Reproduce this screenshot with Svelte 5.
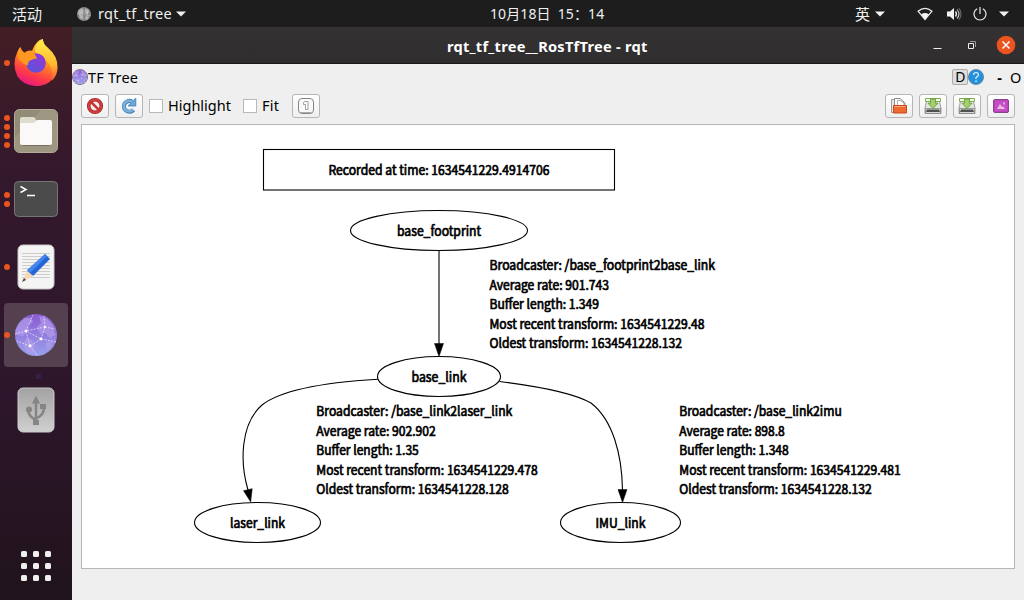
<script>
  const nodes = [
    { name: 'base_footprint', x: 439, y: 230.5, rx: 88.5, ry: 20, w: 84 },
    { name: 'base_link', x: 439, y: 376.5, rx: 61.5, ry: 20, w: 55 },
    { name: 'laser_link', x: 257.5, y: 522.5, rx: 63, ry: 20, w: 55 },
    { name: 'IMU_link', x: 620.5, y: 522.5, rx: 60, ry: 20, w: 50 },
  ];
  const labels = [
    { x: 489.5, y: 270, rows: [['Broadcaster: /base_footprint2base_link', 225.5], ['Average rate: 901.743', 119.5], ['Buffer length: 1.349', 109.5], ['Most recent transform: 1634541229.48', 215], ['Oldest transform: 1634541228.132', 192.5]] },
    { x: 316.3, y: 416, rows: [['Broadcaster: /base_link2laser_link', 196], ['Average rate: 902.902', 119.5], ['Buffer length: 1.35', 102.5], ['Most recent transform: 1634541229.478', 221.5], ['Oldest transform: 1634541228.128', 192.5]] },
    { x: 679.3, y: 416, rows: [['Broadcaster: /base_link2imu', 162.5], ['Average rate: 898.8', 105.5], ['Buffer length: 1.348', 109.5], ['Most recent transform: 1634541229.481', 221.5], ['Oldest transform: 1634541228.132', 192.5]] },
  ];
  const apps = [
    { id: 'firefox', dots: 1 },
    { id: 'files', dots: 4 },
    { id: 'terminal', dots: 2 },
    { id: 'editor', dots: 1 },
    { id: 'rqt', dots: 1, active: true },
  ];
  const nine = [0, 1, 2, 3, 4, 5, 6, 7, 8];
</script>

{#snippet globe(size)}
  <svg width={size} height={size} viewBox="0 0 42 42">
    <circle cx="21" cy="21" r="21" fill="url(#globeFill)" />
    <path d="M4 9 10 4l6 0 2 4-5 3 1 5-6 6-6-1-2-4zM24 2l8 2 6 8 2 9-5 3-5-5-5 1-3-7 4-4zM11 24l6 2 3 6-2 8-6-2-4-7zM30 29l6-2 1 5-5 4z" fill="#b49bea" opacity=".7" />
    <g fill="none" stroke="#e9e0ff" stroke-width=".9" stroke-dasharray="2 1.2" opacity=".85">
      <path d="M0 20 11 17 30 13 26 25 11 17 15 32 26 25 41 28M15 32 2 27M30 13 40 15M11 17 18 1M15 32 22 41M30 13 29 2" />
    </g>
    <g fill="#fff"><circle cx="11" cy="17" r="1.3" /><circle cx="30" cy="13" r="1.1" /><circle cx="26" cy="25" r="1.4" /><circle cx="15" cy="32" r="1.4" /></g>
  </svg>
{/snippet}

{#snippet caret()}
  <svg width="10" height="6" viewBox="0 0 10 6"><path d="M0 .5h10L5 5.5z" fill="#f2f2f2" /></svg>
{/snippet}

{#snippet save()}
  <svg width="18" height="18" viewBox="0 0 18 18">
    <path d="M3 2h12l2 9v5.500H1V11z" fill="#e2e4e0" stroke="#8a8e88" stroke-width=".8" />
    <path d="M1.500 11.500h15v5h-15z" fill="#d5d8d3" stroke="#6a6e68" stroke-width=".6" /><path d="M3 12.500h12l1 2.500H2z" fill="#4f534e" />
    <path d="M1.500 1.500h15v3h-15z" fill="#f3f8ee" stroke="#73a644" stroke-width=".9" />
    <path d="M6.500 2v4.200H4L9 11.500l5-5.300h-2.500V2z" fill="#a3d068" stroke="#609b31" stroke-width=".8" />
  </svg>
{/snippet}

<div class="desktop">
  <header class="panel">
    <span class="activities">活动</span>
    <div class="appmenu">
      <svg width="14" height="14" viewBox="0 0 14 14"><circle cx="7" cy="7" r="7" fill="#858585" /><path d="M1 4l4-3 2 3-2 3 1 4-3 1M8 1l4 3-1 4-3-2zM9 9l3 1-2 3-2-1z" fill="#b4b4b4" /><path d="M0 7l5-2 5 4 4-1M5 5l1 8M10 9l1-7" stroke="#ddd" stroke-width=".4" fill="none" /></svg>
      <span class="appname">rqt_tf_tree</span>
      {@render caret()}
    </div>
    <span class="clock">10月18日&ensp;15：14</span>
    <div class="status">
      <span class="lang">英</span>
      {@render caret()}
      <svg class="wifi" width="16" height="14" viewBox="0 0 16 14"><path d="M1 4.200Q8-1.600 15 4.200L8 12.500z" fill="none" stroke="#eee" stroke-width="1.200" /><path d="M4.200 7.200Q8 5 11.800 7.200L8 12.500z" fill="#f4f4f4" /></svg>
      <svg class="sound" width="16" height="14" viewBox="0 0 16 14"><path d="M1 4.500h3l4-3.500v12l-4-3.500H1z" fill="#f2f2f2" /><path d="M9.500 4.500q2 2.500 0 5" stroke="#eee" stroke-width="1.300" fill="none" /><path d="M11 2.500q4 4.500 0 9" stroke="#ccc" stroke-width="1.100" fill="none" /><path d="M13 1.200q4 5.800 0 11.600" stroke="#777" fill="none" /></svg>
      <svg class="power" width="14" height="14" viewBox="0 0 14 14"><path d="M4.200 1.700a6 6 0 1 0 5.600 0M7 0v7" stroke="#e8e8e8" stroke-width="1.200" fill="none" /></svg>
      {@render caret()}
    </div>
  </header>

  <div class="workspace">
    <nav class="dock">
      {#each apps as app}
        <div class="app" class:active={app.active}>
          <div class="dots">{#each Array(app.dots) as _}<i></i>{/each}</div>
          {#if app.id === 'firefox'}
            <svg class="fox" width="46" height="47" viewBox="0 0 46 48">
              <path d="M7 8q1 4 4 6 4-3 8-2Q23 1 30 0q0 5 5 9l5 7q6 10 3 19-4 11-16 13Q11 49 4 38-2 26 4 13z" fill="url(#fox)" />
              <path d="M30 0q0 5 5 9 10 8 10 20 0 8-6 14 3-13-5-20-10-4-12-11 0-8 8-12z" fill="url(#flame)" />
              <circle cx="23" cy="24.500" r="10" fill="url(#violet)" />
              <path d="M6 9q2 4 6 6 4-3 9-1l3 6q-3 0-7 2-3 2-2 5-6-1-10-7-2-5 1-11z" fill="#ff9820" />
            </svg>
          {:else if app.id === 'files'}
            <svg width="44" height="44" viewBox="0 0 44 44"><rect x=".5" y=".5" width="43" height="43" rx="5" fill="#928b76" stroke="#b1ac9a" /><path d="M1 28 27 1h12q4 0 4 4v34q0 4-4 4H5q-4 0-4-4z" fill="#9d9681" /><path d="M6 16V10q0-2 2-2h11q2 0 2.500 2l1 2H36v8H6z" fill="#dedbcf" /><path d="M6 14h14l3-3h13q2 0 2 2v21q0 2-2 2H8q-2 0-2-2z" fill="#faf9f7" /><path d="M8 36.500h28" stroke="#777160" /></svg>
          {:else if app.id === 'terminal'}
            <svg width="44" height="36" viewBox="0 0 44 36"><rect x=".5" y=".5" width="43" height="35" rx="4" fill="#4b4b4b" stroke="#757575" /><path d="M6.500 5.500 12 8.500 6.500 11.500M13 14.500h8" stroke="#fff" stroke-width="1.500" fill="none" /></svg>
          {:else if app.id === 'editor'}
            <svg width="38" height="46" viewBox="0 0 38 46"><rect x="1" y="1" width="36" height="44" rx="5" fill="#f4f4f4" stroke="#c7c7c7" /><path d="M5 9.500h28M5 12.500h28M5 15.500h28M5 18.500h28M5 21.500h28M5 24.500h28M5 27.500h28M5 30.500h28M5 33.500h28" stroke="#ccc" /><path d="m28 10 5 5-17 17-6-5z" fill="#2466d8" /><path d="m28 10 2 2-17 17-3-3z" fill="#4486ed" /><path d="M10 27 5.500 37.500 16 32z" fill="#f8d7b5" /><path d="m7 34-2 4 4-2z" fill="#444" /></svg>
          {:else}
            {@render globe(42)}
          {/if}
        </div>
      {/each}
      <i class="mark"></i>
      <div class="app usb">
        <svg width="38" height="46" viewBox="0 0 38 46"><rect x="1" y="1" width="36" height="44" rx="5" fill="url(#usbFill)" stroke="#c9c9c9" /><path d="M19 35V14M19 33q-7-3-8-10M19 31q8-2 8-11" fill="none" stroke="#858585" stroke-width="2.500" /><path d="m19 8.500 4 8h-8zM16 33h6v5h-6zM23 17h6v5h-6z" fill="#858585" /><circle cx="12" cy="22.500" r="3" fill="#858585" /></svg>
      </div>
      <div class="launcher">{#each nine as _}<i></i>{/each}</div>
    </nav>

    <main class="window">
      <div class="titlebar">
        <span class="title">rqt_tf_tree__RosTfTree - rqt</span>
        <div class="controls">
          <svg width="9" height="9" viewBox="0 0 9 9"><path d="M.5 7.500h8" stroke="#eee" /></svg>
          <svg width="9" height="9" viewBox="0 0 9 9"><path d="M1.500 2.500h5v5h-5z" stroke="#eee" fill="none" /><path d="M3 .5h5.500V6" stroke="#999" fill="none" /></svg>
          <svg width="20" height="20" viewBox="0 0 20 20"><circle cx="10" cy="10" r="9.300" fill="#e95420" /><path d="m6.500 6.500 7 7m0-7-7 7" stroke="#fff" stroke-width="1.500" /></svg>
        </div>
      </div>

      <div class="plughead">
        <div class="ball">{@render globe(14)}</div>
        <span class="plugname">TF Tree</span>
        <span class="dbtn">D</span>
        <svg width="16" height="16" viewBox="0 0 16 16"><circle cx="8" cy="8" r="7.600" fill="#2491dd" stroke="#63798b" stroke-width=".7" /><path d="M5.600 6q0-2.500 2.400-2.500T10.500 6Q10.500 7 8 8.500V10" stroke="#e4f3fe" stroke-width="1.200" fill="none" /><path d="M7.300 11.500h1.500V13H7.300z" fill="#e4f3fe" /></svg>
        <span class="dash">-</span>
        <span class="oh">O</span>
      </div>

      <div class="tools">
        <div class="btn"><svg width="18" height="18" viewBox="0 0 18 18"><circle cx="9" cy="9" r="6.300" fill="#f8eeee" stroke="#972527" stroke-width="3.600" /><circle cx="9" cy="9" r="6.300" fill="none" stroke="#d43c3e" stroke-width="2.200" /><path d="m4.700 4.700 8.600 8.600" stroke="#c93335" stroke-width="2.600" /></svg></div>
        <div class="btn"><svg width="18" height="18" viewBox="0 0 18 18"><path d="M13.500 12.800A5.400 5.400 0 1 1 12 4.600" fill="none" stroke="#427eb6" stroke-width="4.200" /><path d="M15.800 1v8H8z" fill="#6da5d6" stroke="#427eb6" stroke-width=".8" /><path d="M13 12.500A5.200 5.200 0 1 1 12 4.800" fill="none" stroke="#7bb0dd" stroke-width="2.800" /></svg></div>
        <i class="check"></i><span class="hl">Highlight</span>
        <i class="check"></i><span class="fit">Fit</span>
        <div class="btn"><svg width="18" height="18" viewBox="0 0 18 18"><rect x="1.500" y="1.500" width="15" height="15" rx="3.500" fill="#fafafa" stroke="#858585" /><path d="M3 15.500h12" stroke="#aaa" /><path d="M6.500 5.500 8 4.500h3v8H8.500V7.500h-2z" fill="#fff" stroke="#888" stroke-width=".8" /></svg></div>
        <div class="right">
          <div class="btn"><svg width="18" height="18" viewBox="0 0 18 18"><path d="M1.500 15.500V2.500H7l1.500 2H13l2 2v9z" fill="#e6e6e6" stroke="#9a9a9a" /><path d="M4.500 9V1.500H10L14 5v4z" fill="#fafafa" stroke="#8b8b8b" /><path d="M7.500 9V3.500h3L14 6v3" fill="#fff" stroke="#999" stroke-width=".8" /><path d="M3.500 8.500h13V16h-13z" fill="#ed6b32" stroke="#c8471b" /><path d="M4.500 9.500h11" stroke="#f8a375" /></svg></div>
          <div class="btn">{@render save()}</div>
          <div class="btn">{@render save()}</div>
          <div class="btn"><svg width="18" height="18" viewBox="0 0 18 18"><rect x="1.500" y="2.500" width="15" height="13" rx="1.500" fill="#bd42b9" stroke="#87448b" /><path d="M3 4h12v10H3z" fill="#c44fc5" /><path d="m5 12 3-5 2 3 1-1 2 3z" fill="#eab9e8" /><path d="M11 5.500h2v2h-2z" fill="#e6a7e4" /></svg></div>
        </div>
      </div>

      <div class="canvas">
        <svg width="932" height="444" viewBox="82 125 932 444">
          <g fill="none" stroke="#000" stroke-width="1.1">
            <rect x="263.500" y="149.500" width="351" height="40.500" />
            {#each nodes as n}<ellipse cx={n.x} cy={n.y} rx={n.rx} ry={n.ry} />{/each}
            <path d="M439 250.500V344" />
            <path d="M377.800 379.200C330 382 282 389 262 405C240 424 240 463 248 490" />
            <path d="M499.500 381.500C536 386 572 392 591 403C613 420 622 455 622.500 490" />
          </g>
          <path d="M434.500 343.500h9L439 356.500zM243.500 490.700l8.700-2L250.700 502zM618 489.500h9L622.500 502.500z" stroke="#000" stroke-width=".5" />
          <g class="gtext">
            <text x="328.500" y="175" textLength="221" lengthAdjust="spacingAndGlyphs">Recorded at time: 1634541229.4914706</text>
            {#each nodes as n}<text x={n.x - n.w / 2} y={n.y + 5} textLength={n.w} lengthAdjust="spacingAndGlyphs">{n.name}</text>{/each}
            {#each labels as l}
              {#each l.rows as [t, w], i}<text x={l.x} y={l.y + i * 19.5} textLength={w} lengthAdjust="spacingAndGlyphs">{t}</text>{/each}
            {/each}
          </g>
        </svg>
      </div>
    </main>
  </div>
</div>

<svg class="defs" width="0" height="0">
  <defs>
    <linearGradient id="globeFill" x1="0" y1="0" x2="0" y2="1"><stop offset="0" stop-color="#8a5bd0" /><stop offset="1" stop-color="#9aa1ee" /></linearGradient>
    <linearGradient id="fox" x1=".7" y1="0" x2=".3" y2="1"><stop offset="0" stop-color="#ffd02f" /><stop offset=".45" stop-color="#ff8a1f" /><stop offset=".75" stop-color="#ff3b47" /><stop offset="1" stop-color="#e4148a" /></linearGradient>
    <linearGradient id="flame" x1="0" y1="0" x2="0" y2="1"><stop offset="0" stop-color="#fff04e" /><stop offset=".6" stop-color="#ffb92e" /><stop offset="1" stop-color="#ff5038" /></linearGradient>
    <linearGradient id="violet" x1="1" y1="0" x2="0" y2="1"><stop offset="0" stop-color="#9a34d6" /><stop offset="1" stop-color="#5558d9" /></linearGradient>
    <linearGradient id="usbFill" x1="0" y1="0" x2="0" y2="1"><stop offset="0" stop-color="#a2a2a2" /><stop offset="1" stop-color="#d0d0d0" /></linearGradient>
  </defs>
</svg>

<style>
  :global(body) { overflow: hidden; }
  .desktop { width: 1024px; height: 600px; display: flex; flex-direction: column; background: #efefef; color: #000; font: 14.5px/20px "Noto Sans", "Noto Sans CJK SC", sans-serif; }
  svg { display: block; flex: none; }
  i { display: block; flex: none; }
  .defs { position: absolute; }
  span { white-space: pre; }
  .panel { height: 27px; flex: none; background: #1d1d1d; color: #f0f0f0; display: grid; grid-template-columns: 76px 1fr 120px 414px; align-items: center; font-size: 14px; }
  .activities { padding-left: 12px; font-size: 15px; }
  .appmenu { display: flex; align-items: center; gap: 7px; padding-left: 1px; }
  .appname { font-size: 14.5px; letter-spacing: 0.35px; margin-right: -3px; padding-bottom: 1px; }
  .clock { font-size: 14px; letter-spacing: 0.1px; }
  .status { display: flex; align-items: center; justify-content: flex-end; padding-right: 15px; }
  .lang { margin-right: 5px; font-size: 15px; }
  .wifi { margin-left: 32px; }
  .sound { margin-left: 13px; }
  .power { margin: 0 12px 0 11px; }
  .workspace { display: flex; flex: 1; min-height: 0; }
  .dock { width: 72px; flex: none; box-sizing: border-box; padding-top: 4px; display: flex; flex-direction: column; align-items: center; background: linear-gradient(#431e25, #34182c 25%, #2d162b 65%, #20131b); }
  .app { width: 64px; height: 64px; flex: none; margin-bottom: 4px; display: grid; grid-template-columns: 6px 1fr; border-radius: 4px; align-items: center; }
  .app svg { justify-self: center; margin-right: 6px; }
  .app .fox { margin-bottom: 2px; }
  .active { background: #55404f; }
  .dots { display: flex; flex-direction: column; gap: 3px; }
  .dots i { width: 6px; height: 6px; border-radius: 3px; background: #e95420; }
  .mark { width: 5px; height: 5px; margin: 3px 0 -1px 5px; background: #312146; }
  .usb { grid-template-columns: 1fr; }
  .usb svg { margin: 0; }
  .launcher { margin-top: auto; margin-bottom: 19px; display: grid; grid-template-columns: repeat(3, 6px); gap: 6px; }
  .launcher i { width: 6px; height: 6px; border-radius: 1.5px; background: #f0f0ee; }
  .window { flex: 1; display: flex; flex-direction: column; background: #efefef; }
  .titlebar { height: 37px; flex: none; box-sizing: border-box; background: linear-gradient(#353233, #302d2e); border-bottom: 1px solid #191919; color: #fff; display: grid; grid-template-columns: 375px 202px 1fr; align-items: center; }
  .title { grid-column: 2; font-weight: 700; font-size: 14.6px; letter-spacing: 0.26px; padding-top: 1px; }
  .controls { display: flex; justify-content: flex-end; align-items: center; gap: 25px; padding-right: 8px; }
  .controls svg:last-child { margin-left: -5px; }
  .plughead { height: 27px; flex: none; display: flex; align-items: center; padding-bottom: 1px; box-sizing: border-box; }
  .ball { border: 1px solid #766c86; border-radius: 50%; }
  .plugname { margin-right: auto; letter-spacing: 0.2px; }
  .dbtn { width: 14px; height: 14px; line-height: 14px; text-align: center; border: 1px solid #aaa; border-radius: 2px; background: #dedede; font-size: 14px; }
  .dash { margin-left: 13px; font-weight: 700; }
  .oh { margin-left: 8px; margin-right: 3px; width: 11px; }
  .tools { height: 29px; flex: none; display: flex; align-items: center; padding: 0 9px; }
  .btn { width: 28px; height: 24px; flex: none; box-sizing: border-box; border: 1px solid #b5b5b5; border-radius: 3px; background: linear-gradient(#fff, #efefef); display: grid; place-items: center; margin-right: 6px; }
  .check { width: 14px; height: 14px; box-sizing: border-box; border: 1px solid #b9b9b9; background: #fff; margin-right: 5px; }
  .hl, .fit { padding-bottom: 1px; }
  .hl { width: 75px; }
  .fit { width: 30px; letter-spacing: 0.3px; }
  .right { margin-left: auto; display: flex; gap: 6px; }
  .right .btn { margin: 0; }
  .canvas { width: 932px; height: 443px; margin: 4px 0 0 9px; border: 1px solid #b6b6b6; background: #fff; overflow: hidden; }
  .gtext { font: 13.3px "Noto Sans CJK SC", sans-serif; fill: #000; stroke: #000; stroke-width: 0.7; }
</style>
